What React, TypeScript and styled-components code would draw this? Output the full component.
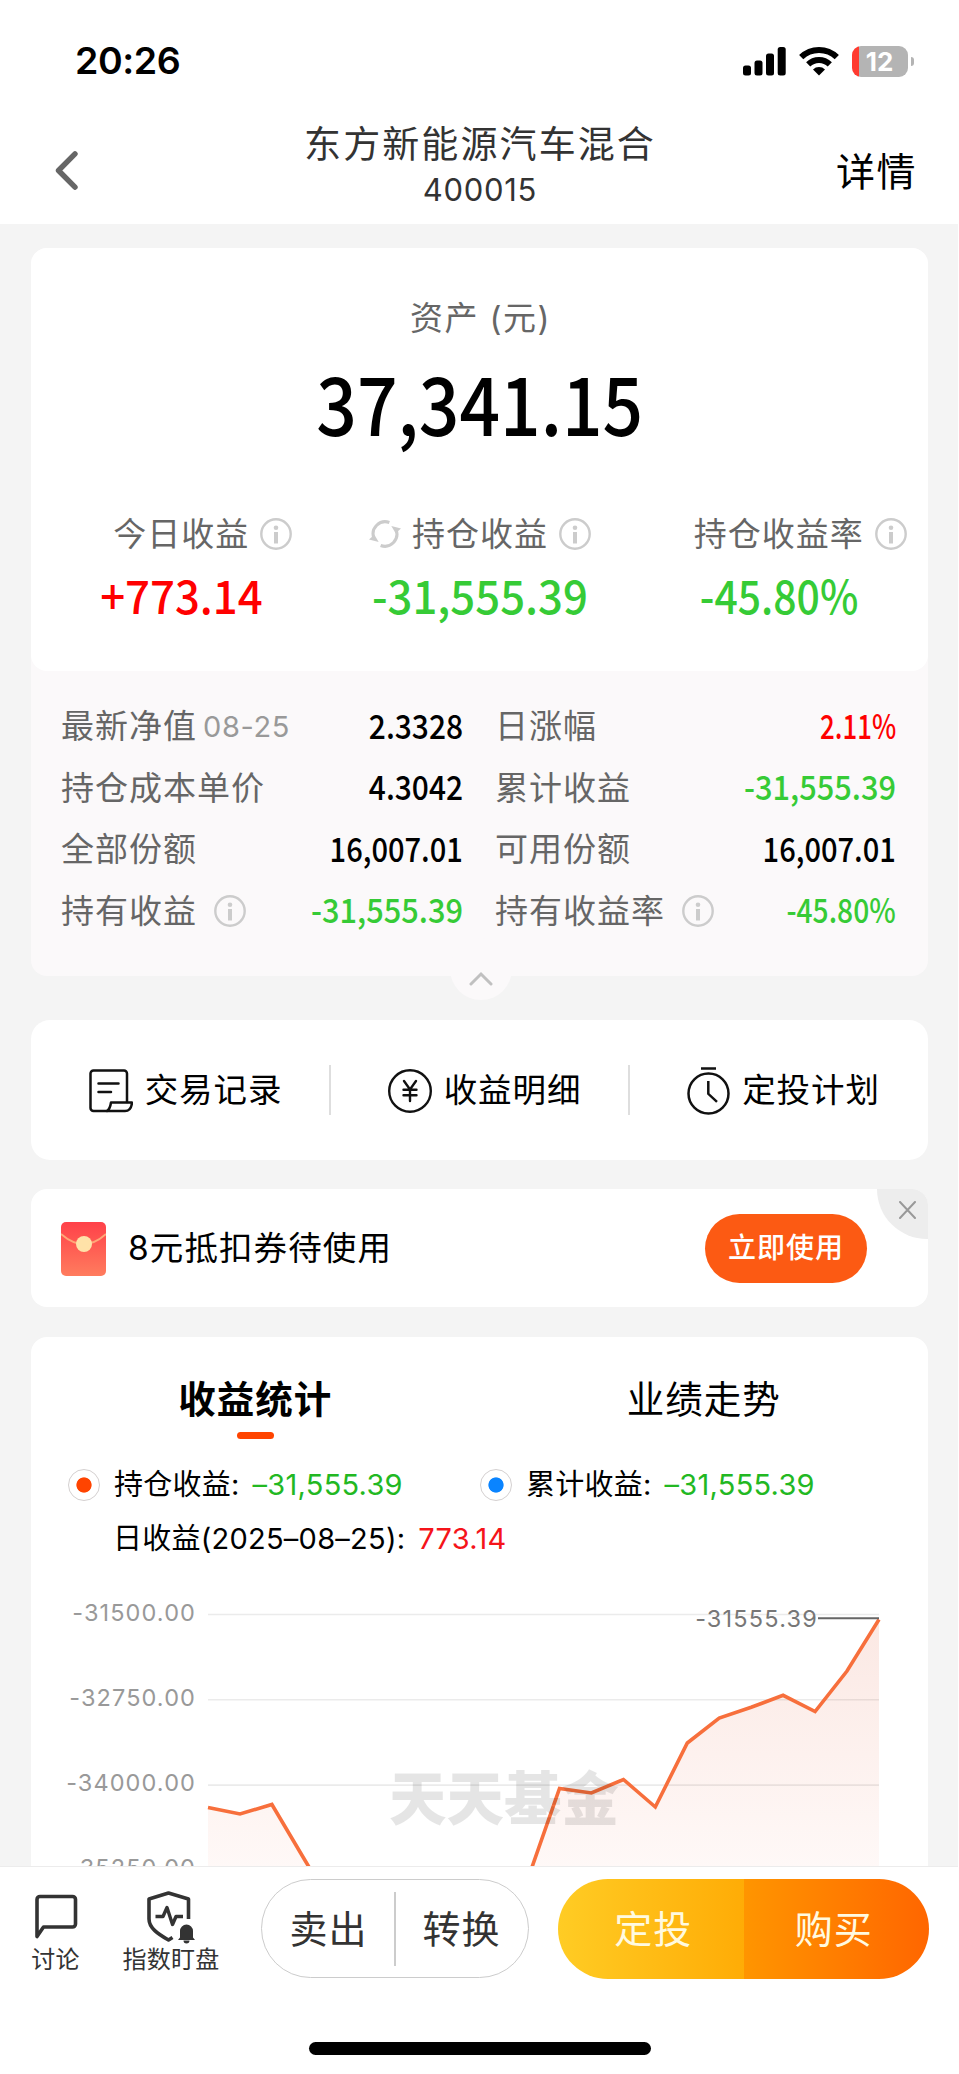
import React from "react";
import styled, { createGlobalStyle } from "styled-components";

const GREEN = "#36cb36";
const RED = "#ff0000";
const INK = "#000";

const GlobalStyle = createGlobalStyle`
  * { box-sizing: border-box; }
  html, body { margin: 0; padding: 0; background: #fff; }
  body {
    font-family: Inter, "Noto Sans CJK SC", sans-serif;
    color: ${INK};
    line-height: 1;
  }
`;

const Page = styled.div`
  width: 958px;
  height: 2074px;
  overflow: hidden;
  display: flex;
  flex-direction: column;
  background: #f4f4f4;
`;

/* ---------- status bar and navigation ---------- */

const TopArea = styled.header`
  height: 224px;
  flex: none;
  background: #fff;
`;

const StatusBar = styled.div`
  height: 116px;
  padding: 6px 44px 0 75px;
  display: flex;
  align-items: center;
  justify-content: space-between;
`;

const Clock = styled.span`
  font-size: 37.5px;
  font-weight: 600;
  letter-spacing: -0.4px;
`;

const StatusIcons = styled.div`
  display: flex;
  align-items: center;
  gap: 13px;
`;

const BatteryWrap = styled.div`
  display: flex;
  align-items: center;
  gap: 3px;
`;

const BatteryBody = styled.div`
  width: 56px;
  height: 31px;
  border-radius: 9px;
  background: linear-gradient(to right, #ff3b30 7px, #b4b4b4 7px);
  color: #fff;
  font-size: 26px;
  font-weight: 700;
  line-height: 32px;
  text-align: center;
  padding-right: 1px;
`;

const BatteryTip = styled.div`
  width: 3px;
  height: 9px;
  border-radius: 0 4px 4px 0;
  background: #b4b4b4;
`;

const NavBar = styled.div`
  height: 108px;
  padding: 0 41px 0 54px;
  display: grid;
  grid-template-columns: 110px 1fr 110px;
  align-items: center;
`;

const NavTitle = styled.div`
  display: flex;
  flex-direction: column;
  align-items: center;
  padding-bottom: 8px;
  margin-left: -11px;
  color: #333;
`;

const FundName = styled.div`
  font-size: 37px;
  line-height: 48px;
  letter-spacing: 2.1px;
`;

const FundCode = styled.div`
  font-size: 31px;
  line-height: 42px;
  letter-spacing: 0.7px;
`;

const NavAction = styled.div`
  padding-top: 2px;
  font-size: 39px;
  letter-spacing: 1.5px;
  text-align: right;
  white-space: nowrap;
`;

/* ---------- shared pieces ---------- */

const Content = styled.main`
  flex: 1;
  min-height: 0;
  overflow: hidden;
  padding: 24px 30px 0 31px;
  display: flex;
  flex-direction: column;
`;

const Card = styled.section<{ $h?: number; $gap?: number; $r?: number }>`
  flex: none;
  background: #fff;
  border-radius: ${(p) => p.$r ?? 16}px;
  height: ${(p) => (p.$h ? `${p.$h}px` : "auto")};
  margin-bottom: ${(p) => p.$gap ?? 0}px;
`;

const Num = styled.span<{ $size: number; $squeeze: number; $origin?: string; $color?: string }>`
  display: inline-block;
  white-space: nowrap;
  font-family: "Noto Sans CJK SC", sans-serif;
  font-weight: 500;
  font-size: ${(p) => p.$size}px;
  color: ${(p) => p.$color ?? INK};
  transform: translateY(-0.07em) scaleX(${(p) => p.$squeeze});
  transform-origin: ${(p) => p.$origin ?? "center"};
`;

const Label = styled.span`
  font-size: 33px;
  letter-spacing: 1px;
  color: #666;
  white-space: nowrap;
`;

const InfoIcon = () => (
  <svg width="32" height="32" viewBox="0 0 32 32" fill="none">
    <circle cx="16" cy="16" r="14.7" stroke="#ccc" strokeWidth="2.4" />
    <circle cx="16" cy="9.8" r="2.3" fill="#ccc" />
    <path d="M16 14v11.5" stroke="#ccc" strokeWidth="4" />
  </svg>
);

const SwitchIcon = () => (
  <svg width="33" height="30" viewBox="0 0 33 30" fill="none">
    <path d="M21 3.2A12.4 12.4 0 0 0 5 19" stroke="#ccc" strokeWidth="3.2" />
    <path d="M12 26.8A12.4 12.4 0 0 0 28 11" stroke="#ccc" strokeWidth="3.2" />
    <path d="M0 20.800l5.500-5 4.500 7.500z" fill="#ccc" />
    <path d="M33 9.200l-5.500 5-4.500-7.500z" fill="#ccc" />
  </svg>
);

/* ---------- asset card ---------- */

const AssetTop = styled.div`
  height: 423px;
  border-radius: 16px;
  background: #fff;
  display: flex;
  flex-direction: column;
  align-items: center;
`;

const AssetLabel = styled(Label)`
  margin-top: 53px;
  padding-left: 2px;
  line-height: 34px;
  letter-spacing: 1.4px;
`;

const AssetAmount = styled.div`
  height: 80px;
  margin-top: 31px;
  display: flex;
  align-items: center;
`;

const Stats = styled.div`
  width: 100%;
  margin-top: 65px;
  padding-left: 1px;
  display: grid;
  grid-template-columns: repeat(3, 1fr);
`;

const Stat = styled.div`
  display: flex;
  flex-direction: column;
  align-items: center;
`;

const StatHead = styled.div`
  height: 46px;
  display: flex;
  align-items: center;
  gap: 11px;
`;

const IconSlot = styled.span`
  width: 32px;
  height: 32px;
  display: flex;
  align-items: center;
`;

const StatValue = styled.div`
  height: 46px;
  margin-top: 17px;
  display: flex;
  align-items: center;
`;

const AssetCard = styled(Card)`
  background: #fbf9fa;
  position: relative;
`;

const Details = styled.div`
  height: 305px;
  padding: 25px 32px 0 30px;
  display: grid;
  grid-template-columns: 402px 1fr;
  grid-template-rows: repeat(4, 61.5px);
  column-gap: 32px;
`;

const DetailRow = styled.div`
  display: flex;
  align-items: center;
  justify-content: space-between;
`;

const DetailLabel = styled.div`
  display: flex;
  align-items: center;
  gap: 17px;
`;

const DateTag = styled.span`
  margin-left: -11px;
  font-size: 29px;
  letter-spacing: 0.6px;
  color: #999;
`;

const CollapseTab = styled.div`
  position: absolute;
  left: 419px;
  bottom: -24px;
  width: 62px;
  height: 62px;
  border-radius: 50%;
  background: #fbf9fa;
  display: flex;
  justify-content: center;
  padding-top: 33px;
`;

/* ---------- shortcuts ---------- */

const Shortcuts = styled(Card)`
  display: flex;
  align-items: center;
`;

const Shortcut = styled.div`
  flex: 1;
  padding: 1px 0 0 10px;
  display: flex;
  align-items: center;
  justify-content: center;
  gap: 12px;
  font-size: 33.5px;
  letter-spacing: 0.9px;
  white-space: nowrap;
`;

const Separator = styled.i<{ $h: number; $c?: string }>`
  width: 2px;
  height: ${(p) => p.$h}px;
  margin: 0 -1px;
  background: ${(p) => p.$c ?? "#dedede"};
`;

/* ---------- coupon ---------- */

const Coupon = styled(Card)`
  position: relative;
  display: flex;
  align-items: center;
  padding: 1px 61px 0 30px;
`;

const CouponText = styled.div`
  flex: 1;
  padding-left: 22px;
  font-size: 33.5px;
  letter-spacing: 1.1px;
`;

const UseButton = styled.button`
  width: 162px;
  height: 69px;
  padding: 0 0 2px;
  border: 0;
  border-radius: 35px;
  background: #fc5a13;
  color: #fff;
  font: 500 28px Inter, "Noto Sans CJK SC", sans-serif;
  line-height: 30px;
  letter-spacing: 1px;
`;

const CloseCorner = styled.div`
  position: absolute;
  top: 0;
  right: 0;
  width: 51px;
  height: 50px;
  border-radius: 0 16px 0 50px;
  background: #ededed;
  padding: 12px 0 0 22px;
`;

/* ---------- statistics ---------- */

const StatsCard = styled(Card)`
  border-radius: 16px 16px 0 0;
`;

const Tabs = styled.div`
  display: grid;
  grid-template-columns: 1fr 1fr;
`;

const Tab = styled.div<{ $active?: boolean }>`
  height: 102px;
  padding-top: 43px;
  display: flex;
  flex-direction: column;
  align-items: center;
  font-size: 37.5px;
  letter-spacing: 1px;
  line-height: 40px;
  font-weight: ${(p) => (p.$active ? 700 : 400)};
  &::after {
    content: "";
    width: 37px;
    height: 7px;
    margin-top: 12px;
    border-radius: 4px;
    background: ${(p) => (p.$active ? "#ff4400" : "transparent")};
  }
`;

const Legend = styled.div`
  padding: 26px 0 0 37px;
  display: grid;
  grid-template-columns: 412px 1fr;
  row-gap: 15px;
  font-size: 29px;
  line-height: 39px;
  letter-spacing: 0.25px;
`;

const LegendItem = styled.div<{ $indent?: boolean }>`
  display: flex;
  align-items: center;
  white-space: nowrap;
  padding-left: ${(p) => (p.$indent ? 45 : 0)}px;
  grid-column: ${(p) => (p.$indent ? "1 / -1" : "auto")};
`;

const Radio = styled.span<{ $c: string }>`
  width: 32px;
  height: 32px;
  margin-right: 14px;
  border: 1px solid #d4d0d0;
  border-radius: 50%;
  background: radial-gradient(circle, ${(p) => p.$c} 7.2px, #fff 8px);
`;

const LegendValue = styled.span<{ $c: string }>`
  margin-left: 13px;
  color: ${(p) => p.$c};
`;

const ChartSvg = styled.svg`
  display: block;
  margin-top: 32px;
`;

/* ---------- bottom bar ---------- */

const BottomBar = styled.footer`
  flex: none;
  width: 959px;
  height: 208px;
  border-top: 1px solid #ececec;
  background: #fff;
  display: flex;
  flex-direction: column;
  align-items: center;
`;

const Actions = styled.div`
  width: 100%;
  height: 124px;
  padding: 12px 30px 0 24px;
  display: flex;
`;

const IconAction = styled.div<{ $w: number }>`
  flex: none;
  width: ${(p) => p.$w}px;
  display: flex;
  flex-direction: column;
  align-items: center;
  font-size: 24px;
  letter-spacing: 0.3px;
  line-height: 29px;
  color: #333;
  white-space: nowrap;
  svg { height: 54px; margin: 12px 0 0; }
`;

const OutlinePill = styled.div`
  flex: none;
  width: 268px;
  height: 99px;
  margin-left: 6px;
  border: 1.5px solid #ccc;
  border-radius: 50px;
  display: flex;
  align-items: center;
  color: #333;
`;

const PillItem = styled.div`
  flex: 1;
  text-align: center;
  font-size: 38px;
  letter-spacing: 1px;
`;

const BuyPill = styled.div`
  flex: none;
  width: 371px;
  height: 100px;
  margin-left: 29px;
  border-radius: 50px;
  overflow: hidden;
  display: flex;
  color: #fffae0;
`;

const BuyHalf = styled.div<{ $from: string; $to: string; $shift: number }>`
  flex: 1;
  display: flex;
  align-items: center;
  justify-content: center;
  padding-left: ${(p) => Math.max(p.$shift, 0)}px;
  padding-right: ${(p) => Math.max(-p.$shift, 0)}px;
  font-size: 38px;
  letter-spacing: 1px;
  background: linear-gradient(to right, ${(p) => p.$from}, ${(p) => p.$to});
`;

const HomeIndicator = styled.div`
  width: 342px;
  height: 13px;
  margin-top: 51px;
  border-radius: 7px;
  background: #000;
`;

/* ---------- data ---------- */

type Detail = { label: string; value: string; color?: string; date?: string; info?: boolean; squeeze: number };

const details: Detail[] = [
  { label: "最新净值", value: "2.3328", date: "08-25", squeeze: 0.88 },
  { label: "日涨幅", value: "2.11%", color: RED, squeeze: 0.76 },
  { label: "持仓成本单价", value: "4.3042", squeeze: 0.88 },
  { label: "累计收益", value: "-31,555.39", color: GREEN, squeeze: 0.905 },
  { label: "全部份额", value: "16,007.01", squeeze: 0.855 },
  { label: "可用份额", value: "16,007.01", squeeze: 0.855 },
  { label: "持有收益", value: "-31,555.39", color: GREEN, info: true, squeeze: 0.905 },
  { label: "持有收益率", value: "-45.80%", color: GREEN, info: true, squeeze: 0.83 },
];

const CHART = { left: 177, right: 848, gridTop: 24.5, gridStep: 85.3 };
const ticks = ["-31500.00", "-32750.00", "-34000.00", "-35250.00"];
const series = [
  217.5, 224, 214.5, 268.5, 322, 360, 372, 380, 366, 350, 290, 198.5, 203, 189.5, 217, 153, 128, 117.3, 105.3, 121.5, 81,
  29.5,
];
const linePoints = series
  .map((y, i) => `${(CHART.left + (i * (CHART.right - CHART.left)) / (series.length - 1)).toFixed(1)},${y}`)
  .join(" ");

const Chart = () => (
  <ChartSvg width="897" height="276" viewBox="0 0 897 276" fontFamily="Inter, sans-serif">
    <defs>
      <linearGradient id="area" gradientUnits="userSpaceOnUse" x1="0" y1="28" x2="0" y2="300">
        <stop offset="0" stopColor="#fbe8e3" />
        <stop offset="1" stopColor="#fffaf9" />
      </linearGradient>
    </defs>
    <polygon points={`${CHART.left},420 ${linePoints} ${CHART.right},420`} fill="url(#area)" />
    {ticks.map((t, i) => {
      const y = CHART.gridTop + i * CHART.gridStep;
      return (
        <g key={t}>
          <line x1={CHART.left} x2={CHART.right} y1={y} y2={y} stroke="#000" strokeOpacity="0.08" strokeWidth="1.6" />
          <text x="165" y={y + 6} textAnchor="end" fontSize="23.5" letterSpacing="1.1" fill="#999">
            {t}
          </text>
        </g>
      );
    })}
    <polyline points={linePoints} fill="none" stroke="#f76f3c" strokeWidth="3.6" />
    <text
      x="473"
      y="230"
      textAnchor="middle"
      fontFamily="'Noto Sans CJK SC', sans-serif"
      fontWeight="900"
      fontSize="57.5"
      fill="#000"
      fillOpacity="0.1"
    >
      天天基金
    </text>
    <line x1="787" x2="848" y1="28.3" y2="28.3" stroke="#666" strokeWidth="2" />
    <text x="787" y="36.5" textAnchor="end" fontSize="23.5" letterSpacing="1.2" fill="#777">
      -31555.39
    </text>
  </ChartSvg>
);

const App = () => (
  <>
    <GlobalStyle />
    <Page>
      <TopArea>
        <StatusBar>
          <Clock>20:26</Clock>
          <StatusIcons>
            <svg width="43" height="29" viewBox="0 0 43 29">
              <rect x="0" y="18.5" width="8" height="10" rx="2.5" />
              <rect x="11.5" y="13.5" width="8" height="15" rx="2.5" />
              <rect x="23" y="6.5" width="8" height="22" rx="2.5" />
              <rect x="34.7" y="0" width="8" height="28.5" rx="2.5" />
            </svg>
            <svg width="40" height="30" viewBox="0 0 40 30" fill="none" stroke="#000" strokeWidth="6">
              <path d="M2.2 11.2A25.5 25.5 0 0 1 37.8 11.2" />
              <path d="M9.2 18.4A15.6 15.6 0 0 1 30.8 18.4" />
              <path d="M20 29.5l-6-6a8.5 8.5 0 0 1 12 0z" fill="#000" stroke="none" />
            </svg>
            <BatteryWrap>
              <BatteryBody>12</BatteryBody>
              <BatteryTip />
            </BatteryWrap>
          </StatusIcons>
        </StatusBar>
        <NavBar>
          <svg width="24" height="40" viewBox="0 0 24 40" fill="none">
            <path d="M21 3.8L4.500 20.500l16.500 16.700" stroke="#666" strokeWidth="5.4" strokeLinecap="round" strokeLinejoin="round" />
          </svg>
          <NavTitle>
            <FundName>东方新能源汽车混合</FundName>
            <FundCode>400015</FundCode>
          </NavTitle>
          <NavAction>详情</NavAction>
        </NavBar>
      </TopArea>

      <Content>
        <AssetCard $h={728} $gap={44}>
          <AssetTop>
            <AssetLabel>资产 (元)</AssetLabel>
            <AssetAmount>
              <Num $size={81} $squeeze={0.88}>37,341.15</Num>
            </AssetAmount>
            <Stats>
              <Stat>
                <StatHead>
                  <IconSlot />
                  <Label>今日收益</Label>
                  <IconSlot><InfoIcon /></IconSlot>
                </StatHead>
                <StatValue><Num $size={46.5} $squeeze={0.94} $color={RED}>+773.14</Num></StatValue>
              </Stat>
              <Stat>
                <StatHead>
                  <IconSlot><SwitchIcon /></IconSlot>
                  <Label>持仓收益</Label>
                  <IconSlot><InfoIcon /></IconSlot>
                </StatHead>
                <StatValue><Num $size={46.5} $squeeze={0.94} $color={GREEN}>-31,555.39</Num></StatValue>
              </Stat>
              <Stat>
                <StatHead>
                  <IconSlot />
                  <Label>持仓收益率</Label>
                  <IconSlot><InfoIcon /></IconSlot>
                </StatHead>
                <StatValue><Num $size={46.5} $squeeze={0.88} $color={GREEN}>-45.80%</Num></StatValue>
              </Stat>
            </Stats>
          </AssetTop>
          <CollapseTab>
            <svg width="24" height="16" viewBox="0 0 24 16" fill="none">
              <path d="M2 13L12 3l10 10" stroke="#c0c0c0" strokeWidth="3" strokeLinecap="round" />
            </svg>
          </CollapseTab>
          <Details>
            {details.map((d) => (
              <DetailRow key={d.label}>
                <DetailLabel>
                  <Label>{d.label}</Label>
                  {d.date && <DateTag>{d.date}</DateTag>}
                  {d.info && <InfoIcon />}
                </DetailLabel>
                <Num $size={34} $squeeze={d.squeeze} $origin="right" $color={d.color}>{d.value}</Num>
              </DetailRow>
            ))}
          </Details>
        </AssetCard>

        <Shortcuts $h={140} $gap={29} $r={19}>
          <Shortcut>
            <svg width="44" height="44" viewBox="0 0 44 44" fill="none" stroke="#111" strokeWidth="2.5" strokeLinejoin="round" strokeLinecap="round">
              <path d="M18 42H4.500a3 3 0 0 1-3-3V4.500a3 3 0 0 1 3-3H35a3 3 0 0 1 3 3V33" />
              <path d="M18 42c3-2 3.500-5 4-8.500H43c-.5 5.500-2.500 8.500-7 8.500z" />
              <path d="M9.500 14.500h20M9.500 23h12.500" />
            </svg>
            交易记录
          </Shortcut>
          <Separator $h={50} />
          <Shortcut>
            <svg width="44" height="44" viewBox="0 0 44 44" fill="none" stroke="#111" strokeWidth="2.4" strokeLinecap="round">
              <circle cx="22" cy="22" r="20.800" />
              <path d="M16 12l6 8.500 6-8.500M22 20.500V32M15.500 20.800h13M15.500 26.200h13" />
            </svg>
            收益明细
          </Shortcut>
          <Separator $h={50} />
          <Shortcut>
            <svg width="43" height="48" viewBox="0 0 43 48" fill="none" stroke="#111" strokeWidth="2.5">
              <circle cx="21.500" cy="26.500" r="20" />
              <path d="M14 1.500h15M21.300 14v12.800l8.700 8" />
            </svg>
            定投计划
          </Shortcut>
        </Shortcuts>

        <Coupon $h={118} $gap={30}>
          <svg width="45" height="54" viewBox="0 0 45 54">
            <defs>
              <linearGradient id="packet" x1="0" y1="0" x2="0" y2="1">
                <stop offset="0" stopColor="#ff4149" />
                <stop offset="1" stopColor="#ff7c5e" />
              </linearGradient>
            </defs>
            <rect width="45" height="54" rx="5" fill="url(#packet)" />
            <path d="M0 12q23 20 45 0" fill="none" stroke="#ffa878" strokeWidth="1.8" />
            <circle cx="23" cy="22" r="8" fill="#ffe2a8" />
          </svg>
          <CouponText>8元抵扣券待使用</CouponText>
          <UseButton>立即使用</UseButton>
          <CloseCorner>
            <svg width="17" height="18" viewBox="0 0 17 18" fill="none">
              <path d="M1 1l15 16M16 1L1 17" stroke="#999" strokeWidth="2" strokeLinecap="round" />
            </svg>
          </CloseCorner>
        </Coupon>

        <StatsCard>
          <Tabs>
            <Tab $active>收益统计</Tab>
            <Tab>业绩走势</Tab>
          </Tabs>
          <Legend>
            <LegendItem>
              <Radio $c="#ff4400" />
              持仓收益:
              <LegendValue $c="#22b822">–31,555.39</LegendValue>
            </LegendItem>
            <LegendItem>
              <Radio $c="#0a84ff" />
              累计收益:
              <LegendValue $c="#22b822">–31,555.39</LegendValue>
            </LegendItem>
            <LegendItem $indent>
              日收益(2025–08–25):
              <LegendValue $c="#f5141a">773.14</LegendValue>
            </LegendItem>
          </Legend>
          <Chart />
        </StatsCard>
      </Content>

      <BottomBar>
        <Actions>
          <IconAction $w={63}>
            <svg width="44" viewBox="0 0 44 54" fill="none">
              <path d="M3 45.500V8.500a3 3 0 0 1 3-3h32.500a3 3 0 0 1 3 3V33a3 3 0 0 1-3 3H9.500z" stroke="#333" strokeWidth="3.6" strokeLinejoin="round" />
            </svg>
            讨论
          </IconAction>
          <IconAction $w={168}>
            <svg width="50" viewBox="0 0 50 54" fill="none">
              <path d="M42.500 28V8L22.500 2 3 8v20c0 9 9 15 19.500 21l4-2.500" stroke="#333" strokeWidth="3.6" strokeLinejoin="round" />
              <path d="M9.500 25.500h7.500l4-9 5.500 17 3.500-8h7" stroke="#333" strokeWidth="3.4" strokeLinejoin="round" />
              <path d="M40.500 33.500a6.500 6.500 0 0 1 6.500 6.500v6.500l2 2.500H32l2-2.500V40a6.500 6.500 0 0 1 6.500-6.500zM37.500 49.500h6a3 3 0 0 1-6 0z" fill="#333" />
            </svg>
            指数盯盘
          </IconAction>
          <OutlinePill>
            <PillItem>卖出</PillItem>
            <Separator $h={74} $c="#ccc" />
            <PillItem>转换</PillItem>
          </OutlinePill>
          <BuyPill>
            <BuyHalf $from="#ffcc24" $to="#ffac06" $shift={5}>定投</BuyHalf>
            <BuyHalf $from="#ff9500" $to="#ff6600" $shift={-5}>购买</BuyHalf>
          </BuyPill>
        </Actions>
        <HomeIndicator />
      </BottomBar>
    </Page>
  </>
);

export default App;
